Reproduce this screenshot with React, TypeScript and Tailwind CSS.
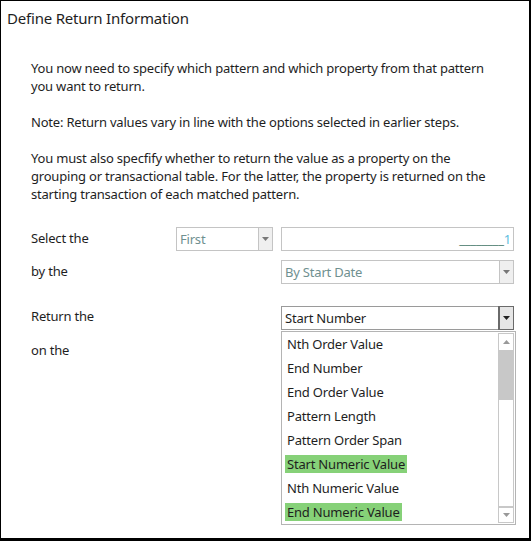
import React from 'react';

const font = { fontFamily: '"Noto Sans", "Open Sans", sans-serif' };

const Arrow: React.FC<{ dark?: boolean }> = ({ dark }) => (
  <svg width="7" height="4" viewBox="0 0 7 4">
    <path d="M0 0 H7 L3.5 4 Z" fill={dark ? '#222' : '#777'} />
  </svg>
);

const Combo: React.FC<{ text: string; width: string; disabled?: boolean; active?: boolean }> = ({ text, width, disabled, active }) => (
  <div className={`flex h-[24px] ${width} border ${active ? 'border-[#9a9a9a]' : 'border-[#c4c4c4]'} bg-white`}>
    <div className={`flex-1 pl-[3px] leading-[22px] text-[13px] ${disabled ? 'text-[#6f9090]' : 'text-[#1e1e1e]'}`}>{text}</div>
    <div
      className={`w-[14px] flex items-center justify-center border-l ${
        active ? 'border-[#6a6a6a] bg-[#e6e6e6] outline outline-1 outline-[#6a6a6a]' : 'border-[#c4c4c4] bg-[#efefef]'
      }`}
    >
      <Arrow dark={active} />
    </div>
  </div>
);

const items = [
  'Nth Order Value',
  'End Number',
  'End Order Value',
  'Pattern Length',
  'Pattern Order Span',
  'Start Numeric Value',
  'Nth Numeric Value',
  'End Numeric Value',
];
const highlighted = ['Start Numeric Value', 'End Numeric Value'];

export default function App() {
  return (
    <div
      style={font}
      className="w-[531px] h-[541px] bg-white border border-black border-r-2 border-b-[3px] overflow-hidden text-[#1e1e1e] tracking-[-0.2px]"
    >
      <div className="pl-[6px] pt-[7px] text-[15px] leading-[20px]">Define Return Information</div>

      <div className="pl-[30px] w-[490px] pt-[31px] text-[13px] leading-[18px] space-y-[18px]">
        <p>
          You now need to specify which pattern and which property from that pattern you want to return.
        </p>
        <p>Note: Return values vary in line with the options selected in earlier steps.</p>
        <p>
          You must also specfify whether to return the value as a property on the grouping or transactional table. For
          the latter, the property is returned on the starting transaction of each matched pattern.
        </p>
      </div>

      <div className="pl-[30px] pt-[24px] text-[13px]">
        <div className="flex items-center h-[24px]">
          <div className="w-[145px]">Select the</div>
          <Combo text="First" width="w-[97px]" disabled />
          <div className="ml-[8px] w-[233px] h-[24px] border border-[#c4c4c4] flex items-center justify-end pr-[2px]">
            <span className="text-[#4f7f72] leading-[20px]">________</span>
            <span className="text-[#5bbde0] leading-[20px]">1</span>
          </div>
        </div>
        <div className="flex items-center h-[24px] mt-[9px]">
          <div className="w-[250px]">by the</div>
          <Combo text="By Start Date" width="w-[233px]" disabled />
        </div>

        <div className="flex mt-[22px]">
          <div className="w-[250px]">
            <div className="h-[20px] leading-[20px]">Return the</div>
            <div className="h-[20px] leading-[20px] mt-[14px]">on the</div>
          </div>
          <div className="w-[235px]">
            <div className="w-[233px]">
              <Combo text="Start Number" width="w-[233px]" active />
            </div>
            <div className="mt-[1px] w-[235px] h-[194px] border border-[#b4b4b4] bg-white flex px-[1px] pt-[1px] overflow-hidden">
              <div className="flex-1 flex flex-col pl-[2px] -mt-[1px] overflow-hidden">
                {items.map((it) => (
                  <div key={it} className="h-[24px] shrink-0 flex items-center">
                    <span
                      className={`leading-[18px] px-[2px] ${highlighted.includes(it) ? 'bg-[#86d178]' : ''}`}
                    >
                      {it}
                    </span>
                  </div>
                ))}
              </div>
              <div className="w-[16px] h-[190px] flex flex-col border border-[#c8c8c8] bg-white">
                <div className="h-[16px] flex items-center justify-center">
                  <svg width="7" height="4" viewBox="0 0 7 4">
                    <path d="M0 4 H7 L3.5 0 Z" fill="#999" />
                  </svg>
                </div>
                <div className="h-[50px] bg-[#c8c8c8]" />
                <div className="flex-1" />
                <div className="h-[16px] flex items-center justify-center border-t-2 border-[#c8c8c8]">
                  <svg width="7" height="4" viewBox="0 0 7 4">
                    <path d="M0 0 H7 L3.5 4 Z" fill="#999" />
                  </svg>
                </div>
              </div>
            </div>
          </div>
        </div>
      </div>
    </div>
  );
}
